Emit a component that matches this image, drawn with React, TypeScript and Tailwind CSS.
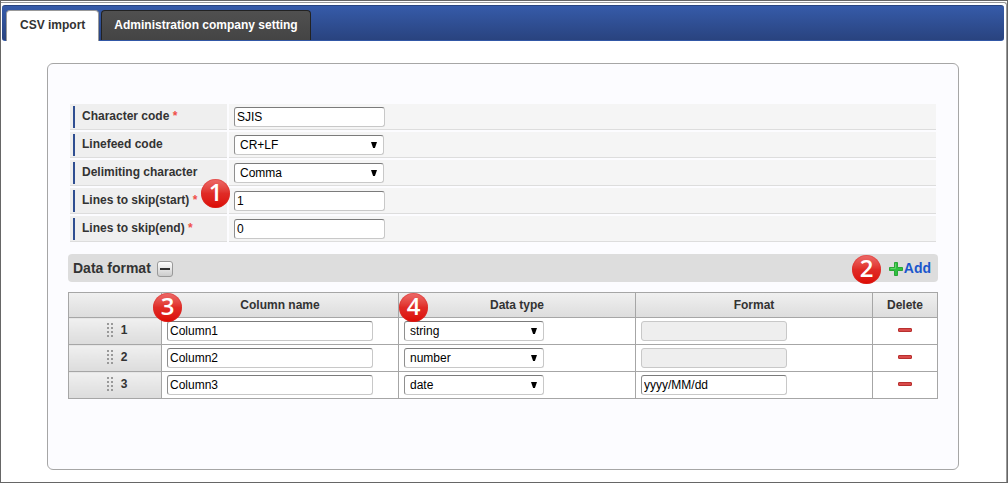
import React, { useState } from "react";

const fieldBase =
  "h-5 rounded-[3px] border border-[#c8c8c8] border-t-[#7b7b7b] border-l-[#8f8f8f] bg-white text-[12px] leading-4 text-black outline-none";

function TextField({
  label,
  id,
  value,
  className,
  disabled = false,
}: {
  label?: string;
  id?: string;
  value: string;
  className: string;
  disabled?: boolean;
}) {
  const [text, setText] = useState(value);
  const look = disabled
    ? "h-5 rounded-[3px] border border-[#c8c8c8] bg-[#eeeeee] text-[12px] leading-4"
    : fieldBase;
  return (
    <input
      id={id}
      aria-label={label}
      type="text"
      value={text}
      disabled={disabled}
      onChange={(e) => setText(e.target.value)}
      className={`block px-[2px] ${look} ${className}`}
    />
  );
}

function SelectField({
  label,
  id,
  value,
  options,
  className,
}: {
  label?: string;
  id?: string;
  value: string;
  options: string[];
  className: string;
}) {
  return (
    <span className={`relative block ${className}`}>
      <select
        id={id}
        aria-label={label}
        defaultValue={value}
        className={`block w-full appearance-none pr-5 pl-[5px] ${fieldBase}`}
      >
        {options.map((o) => (
          <option key={o}>{o}</option>
        ))}
      </select>
      <svg
        viewBox="0 0 6 6"
        className="pointer-events-none absolute top-[7px] right-[7px] size-[6px]"
        aria-hidden="true"
      >
        <path d="M0 0h6L3.9 6H2.1Z" fill="#000" />
      </svg>
    </span>
  );
}

function Badge({ n, className }: { n: number; className: string }) {
  return (
    <span
      className={`absolute z-10 flex size-[29px] items-center justify-center rounded-full bg-linear-to-b from-[#ec6a6a] via-[#e02b26] to-[#dc0500] pb-[3px] font-['Open_Sans','Noto_Sans',sans-serif] text-[24px] leading-none font-semibold text-white ring-1 ring-[#d9332e]/40 ring-inset ${className}`}
    >
      {n}
    </span>
  );
}

function FormRow({
  id,
  label,
  required = false,
  badge,
  children,
}: {
  id: string;
  label: string;
  required?: boolean;
  badge?: React.ReactNode;
  children: React.ReactNode;
}) {
  return (
    <div className="flex h-[26px] gap-[2px]">
      <div className="relative w-[157px] shrink-0 border-b border-[#dddddd] bg-[#efefef] py-[2px] pl-[3px]">
        <label
          htmlFor={id}
          className="block h-[22px] border-l-2 border-[#2f4e91] pl-[7px] text-[12px] leading-5 font-bold text-[#333333]"
        >
          {label}
          {required && <span className="text-[#f0504a]"> *</span>}
        </label>
        {badge}
      </div>
      <div className="grow border-b border-[#dddddd] bg-[#f5f5f5] pt-[3px] pl-[5px]">{children}</div>
    </div>
  );
}

function Grip() {
  return (
    <svg viewBox="0 0 6 14" className="h-[14px] w-[6px]" aria-hidden="true">
      {[0, 4, 8, 12].map((y) => (
        <g key={y} fill="#999">
          <rect x="0" y={y} width="2" height="2" />
          <rect x="4" y={y} width="2" height="2" />
        </g>
      ))}
    </svg>
  );
}

const rows = [
  { name: "Column1", type: "string", format: "" },
  { name: "Column2", type: "number", format: "" },
  { name: "Column3", type: "date", format: "yyyy/MM/dd" },
];

const cell = "border border-[#a6a6a6]";
const shaded = "bg-linear-to-b from-[#f0f0f0] to-[#dcdcdc]";

export default function App() {
  return (
    <div className="flex min-h-screen flex-col border border-[#666666] bg-white pt-px font-['Liberation_Sans',Arial,sans-serif] text-[12px] text-[#333333]">
      <div className="grow rounded-tr-[3px] border-t border-r border-[#999999] pt-[2px]">
        <nav className="mr-[2px] ml-px flex h-9 items-end gap-[2px] rounded-[3px] border-t border-b border-t-[#27437f] border-b-[#3157a6] bg-linear-to-b from-[#365ba9] to-[#29437f] pl-1">
          <a
            href="#csv"
            aria-current="page"
            className="-mb-px flex h-[31px] items-center rounded-t-[4px] border-x border-t border-[#999999] bg-white px-[13px] pb-[2px] font-bold text-[#333333]"
          >
            CSV import
          </a>
          <a
            href="#company"
            className="flex h-[30px] items-center rounded-t-[4px] border-x border-t border-[#222222] bg-linear-to-b from-[#505050] to-[#444444] px-3 pb-px font-bold text-white"
          >
            Administration company setting
          </a>
        </nav>

        <main className="mt-[22px] mr-[47px] mb-3 ml-[46px] rounded-[6px] border border-[#a6a6a6] bg-[#fcfcff] px-5 pt-10 pb-[70px]">
          <form className="mr-[2px] ml-[2px] flex flex-col gap-[2px]">
            <FormRow id="charset" label="Character code" required>
              <TextField id="charset" value="SJIS" className="w-[151px]" />
            </FormRow>
            <FormRow id="linefeed" label="Linefeed code">
              <SelectField
                id="linefeed"
                value="CR+LF"
                options={["CR+LF", "CR", "LF"]}
                className="w-[150px]"
              />
            </FormRow>
            <FormRow id="delimiter" label="Delimiting character">
              <SelectField
                id="delimiter"
                value="Comma"
                options={["Comma", "Tab"]}
                className="w-[150px]"
              />
            </FormRow>
            <FormRow
              id="skip-start"
              label="Lines to skip(start)"
              required
              badge={<Badge n={1} className="-top-[9px] right-[-3px]" />}
            >
              <TextField id="skip-start" value="1" className="w-[151px]" />
            </FormRow>
            <FormRow id="skip-end" label="Lines to skip(end)" required>
              <TextField id="skip-end" value="0" className="w-[151px]" />
            </FormRow>
          </form>

          <div className="relative mt-3 flex h-7 items-center rounded-[4px] bg-[#dddddd] pr-[7px] pl-[5px]">
            <h2 className="text-[14px] leading-5 font-bold">Data format</h2>
            <button
              type="button"
              aria-label="Collapse"
              className="mt-px ml-[6px] flex size-4 items-center justify-center rounded-[3px] border border-[#999999] bg-linear-to-b from-white to-[#cccccc]"
            >
              <span className="h-[2px] w-[10px] bg-[#333333]" />
            </button>
            <button
              type="button"
              className="ml-auto flex items-center gap-px text-[14px] leading-5 font-bold text-[#1a56cc]"
            >
              <svg viewBox="0 0 14 14" className="mt-px size-[14px]" aria-hidden="true">
                <path
                  d="M5.5 .5h3v5h5v3h-5v5h-3v-5h-5v-3h5Z"
                  fill="#2fc040"
                  stroke="#2aa536"
                />
                <path d="M6.5 1.5v5h-5" fill="none" stroke="#62d368" />
              </svg>
              Add
            </button>
            <Badge n={2} className="top-[1px] right-[57px]" />
          </div>

          <table className="mt-[10px] w-full table-fixed border-collapse bg-white">
            <colgroup>
              <col className="w-[93px]" />
              <col />
              <col />
              <col />
              <col className="w-[65px]" />
            </colgroup>
            <thead>
              <tr className={`h-[25px] ${shaded}`}>
                <th className={cell} aria-label="Order" />
                <th className={`relative p-0 ${cell}`}>
                  Column name
                  <Badge n={3} className="top-0 -left-[9px]" />
                </th>
                <th className={`relative p-0 ${cell}`}>
                  Data type
                  <Badge n={4} className="top-0 left-0" />
                </th>
                <th className={`p-0 ${cell}`}>Format</th>
                <th className={`p-0 ${cell}`}>Delete</th>
              </tr>
            </thead>
            <tbody>
              {rows.map((row, i) => (
                <tr key={row.name} className="h-[27px]">
                  <th scope="row" className={`p-0 pb-[2px] ${cell} ${shaded}`}>
                    <span className="flex items-center justify-center gap-2 pl-1">
                      <Grip />
                      {i + 1}
                    </span>
                  </th>
                  <td className={`p-0 pl-[5px] ${cell}`}>
                    <TextField
                      label={`Column name ${i + 1}`}
                      value={row.name}
                      className="w-[206px]"
                    />
                  </td>
                  <td className={`p-0 pl-[5px] ${cell}`}>
                    <SelectField
                      label={`Data type ${i + 1}`}
                      value={row.type}
                      options={["string", "number", "date"]}
                      className="w-[140px]"
                    />
                  </td>
                  <td className={`p-0 pl-[5px] ${cell}`}>
                    <TextField
                      label={`Format ${i + 1}`}
                      value={row.format}
                      disabled={row.type !== "date"}
                      className="w-[146px]"
                    />
                  </td>
                  <td className={`p-0 pb-[2px] ${cell}`}>
                    <button
                      type="button"
                      aria-label={`Delete ${row.name}`}
                      className="mx-auto flex h-4 w-5 items-center justify-center"
                    >
                      <svg viewBox="0 0 14 4" className="h-1 w-[14px]" aria-hidden="true">
                        <rect
                          x=".5"
                          y=".5"
                          width="13"
                          height="3"
                          rx=".5"
                          fill="#d94a4a"
                          stroke="#b8302f"
                        />
                      </svg>
                    </button>
                  </td>
                </tr>
              ))}
            </tbody>
          </table>
        </main>
      </div>
    </div>
  );
}
